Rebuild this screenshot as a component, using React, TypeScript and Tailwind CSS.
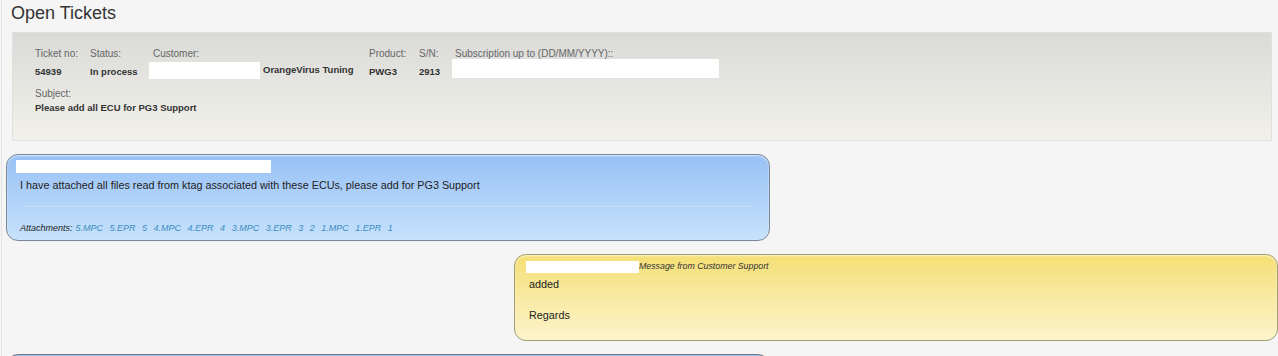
import React from 'react';

const attachments = ['5.MPC', '5.EPR', '5', '4.MPC', '4.EPR', '4', '3.MPC', '3.EPR', '3', '2', '1.MPC', '1.EPR', '1'];

const Field = ({ label, value, className = '' }: any) => (
  <div className={className}>
    <div className="h-[14px] leading-[14px] text-[#666]">{label}</div>
    <div className="mt-[1px] h-[19px] leading-[19px] font-bold text-[9.5px] text-[#333]">{value}</div>
  </div>
);

export default function App() {
  return (
    <div className="min-h-screen bg-[#f5f5f5] font-['Liberation_Sans',Arial,sans-serif] text-[#333]">
      <div className="ml-[1px] border-l border-[#e4e4e4] pr-[1px]">
        {/* Title */}
        <h1 className="pl-[9px] pt-[1px] h-[32px] text-[18px] leading-[24px] font-normal text-[#333]">Open Tickets</h1>

        {/* Ticket header panel */}
        <div className="ml-[10px] mr-[5px] h-[109px] border border-[#e0e0de] bg-gradient-to-b from-[#dadad8] to-[#f2f1ea] pl-[22px] pt-[14px] text-[10px]">
          <div className="flex">
            <Field label="Ticket no:" value="54939" className="w-[55px]" />
            <Field label="Status:" value="In process" className="w-[59px]" />
            <div className="w-[220px]">
              <div className="h-[14px] leading-[14px] pl-[4px] text-[#666]">Customer:</div>
              <div className="mt-[-1px] flex items-center h-[21px]">
                <div className="w-[111px] h-[17px] bg-white" />
                <span className="ml-[3px] font-bold text-[9.5px]">OrangeVirus Tuning</span>
              </div>
            </div>
            <Field label="Product:" value="PWG3" className="w-[50px]" />
            <Field label="S/N:" value="2913" className="w-[33px]" />
            <div>
              <div className="h-[14px] leading-[14px] pl-[3px] text-[#666]">Subscription up to (DD/MM/YYYY)::</div>
              <div className="mt-[-2px] w-[267px] h-[19px] bg-white" />
            </div>
          </div>
          <div className="mt-[6px]">
            <div className="h-[14px] leading-[14px] text-[#666]">Subject:</div>
            <div className="h-[14px] leading-[14px] font-bold text-[9.5px]">Please add all ECU for PG3 Support</div>
          </div>
        </div>

        {/* Customer message */}
        <div className="mt-[13px] ml-[4px] w-[764px] h-[87px] rounded-[12px] border border-[#7b8796] bg-gradient-to-b from-[#98c1f5] to-[#c6e2fc] shadow-[inset_0_1px_2px_rgba(255,255,255,0.7)] px-[9px] pt-[5px]">
          <div className="w-[255px] h-[13px] bg-white" />
          <p className="pl-[4px] mt-[5px] text-[10.8px] leading-[14px] text-[#222]">
            I have attached all files read from ktag associated with these ECUs, please add for PG3 Support
          </p>
          <div className="mt-[14px] ml-[5px] mr-[4px] border-t border-[#c3dbf6] h-[1px]" />
          <div className="mt-[15px] pl-[4px] text-[9px] italic leading-[12px] flex gap-[6px]">
            <span className="text-[#222]">Attachments:</span>
            <span className="flex gap-[6.5px] ml-[-3px]">
              {attachments.map((a, i) => (
                <span key={i} className="text-[#3d8cc0]">{a}</span>
              ))}
            </span>
          </div>
        </div>

        {/* Support reply */}
        <div className="mt-[13px] ml-[512px] w-[764px] h-[87px] rounded-[12px] border border-[#a39c6e] bg-gradient-to-b from-[#f5df74] to-[#fcf4cb] shadow-[inset_0_1px_2px_rgba(255,255,255,0.7)] px-[11px] pt-[5px]">
          <div className="flex items-center h-[13px]">
            <div className="w-[113px] h-[12px] bg-white" />
            <span className="text-[8.8px] italic text-[#333]">Message from Customer Support</span>
          </div>
          <div className="pl-[3px] mt-[4px] text-[10.8px] leading-[14px] text-[#222]">
            <p>added</p>
            <p className="mt-[17px]">Regards</p>
          </div>
        </div>

        {/* Next message (cut off) */}
        <div className="mt-[13px] ml-[4px] w-[764px] h-[87px] rounded-[12px] border border-[#777] bg-gradient-to-b from-[#98c1f5] to-[#c6e2fc]" />
      </div>
    </div>
  );
}
